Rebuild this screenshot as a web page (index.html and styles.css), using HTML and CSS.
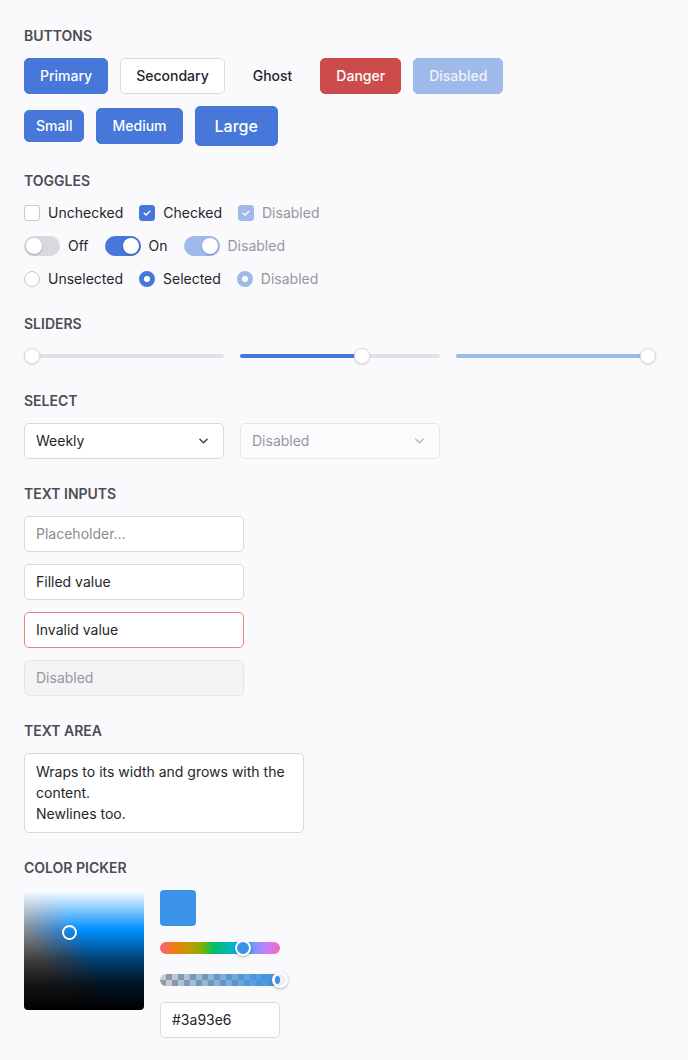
FILE: index.html
```html
<!DOCTYPE html>
<html>
<head>
    <meta charset="UTF-8">
    <title>Controls</title>
    <link rel="stylesheet" href="styles.css">
</head>
<body>

<div class="page">

    <div class="section">
        <h2 class="title">Buttons</h2>
        <div class="row">
            <button class="btn btn-primary">Primary</button>
            <button class="btn btn-secondary">Secondary</button>
            <button class="btn btn-ghost">Ghost</button>
            <button class="btn btn-danger">Danger</button>
            <button class="btn btn-primary is-disabled">Disabled</button>
        </div>
        <div class="row">
            <button class="btn btn-primary btn-sm">Small</button>
            <button class="btn btn-primary">Medium</button>
            <button class="btn btn-primary btn-lg">Large</button>
        </div>
    </div>

    <div class="section">
        <h2 class="title">Toggles</h2>
        <div class="toggle-rows">
            <div class="opts">
                <label class="opt"><span class="check"></span>Unchecked</label>
                <label class="opt"><span class="check on"><svg viewBox="0 0 16 16"><path d="M4.8 8.2l2.2 2.1 4.2-4.4"/></svg></span>Checked</label>
                <label class="opt dis"><span class="check on"><svg viewBox="0 0 16 16"><path d="M4.8 8.2l2.2 2.1 4.2-4.4"/></svg></span>Disabled</label>
            </div>
            <div class="opts">
                <label class="opt"><span class="switch"><i></i></span>Off</label>
                <label class="opt"><span class="switch on"><i></i></span>On</label>
                <label class="opt dis"><span class="switch on"><i></i></span>Disabled</label>
            </div>
            <div class="opts">
                <label class="opt"><span class="radio"></span>Unselected</label>
                <label class="opt"><span class="radio on"></span>Selected</label>
                <label class="opt dis"><span class="radio on"></span>Disabled</label>
            </div>
        </div>
    </div>

    <div class="section">
        <h2 class="title">Sliders</h2>
        <div class="sliders">
            <div class="slider">
                <div class="track"><div class="fill" style="width: 8px;"></div></div>
                <span class="thumb" style="left: 0px;"></span>
            </div>
            <div class="slider">
                <div class="track"><div class="fill" style="width: 122px;"></div></div>
                <span class="thumb" style="left: 114px;"></span>
            </div>
            <div class="slider dis">
                <div class="track"><div class="fill" style="width: 200px;"></div></div>
                <span class="thumb" style="left: 184px;"></span>
            </div>
        </div>
    </div>

    <div class="section">
        <h2 class="title">Select</h2>
        <div class="selects">
            <div class="select">
                <span>Weekly</span>
                <svg class="chev" viewBox="0 0 10 6"><path d="M1 1l4 4 4-4"/></svg>
            </div>
            <div class="select dis">
                <span>Disabled</span>
                <svg class="chev" viewBox="0 0 10 6"><path d="M1 1l4 4 4-4"/></svg>
            </div>
        </div>
    </div>

    <div class="section">
        <h2 class="title">Text inputs</h2>
        <div class="inputs">
            <div class="field placeholder">Placeholder...</div>
            <div class="field">Filled value</div>
            <div class="field invalid">Invalid value</div>
            <div class="field dis">Disabled</div>
        </div>
    </div>

    <div class="section">
        <h2 class="title">Text area</h2>
        <div class="textarea">Wraps to its width and grows with the content.<br>Newlines too.</div>
    </div>

    <div class="section">
        <h2 class="title">Color picker</h2>
        <div class="picker">
            <div class="sv">
                <span class="sv-mark" style="left: 38px; top: 35px;"></span>
            </div>
            <div class="picker-side">
                <div class="swatch" style="background: #3a93e6;"></div>
                <div class="bar-row">
                    <div class="bar hue"></div>
                    <span class="bar-thumb" style="left: 75px; background: #3a93e6;"></span>
                </div>
                <div class="bar-row">
                    <div class="bar alpha"><div class="alpha-fill"></div></div>
                    <span class="bar-thumb alpha-thumb" style="left: 112px;"></span>
                </div>
                <div class="field hex">#3a93e6</div>
            </div>
        </div>
    </div>

</div>

</body>
</html>
```

FILE: styles.css
```css
*{ margin:0; padding:0; box-sizing:border-box;}
body{font:14px/20px Inter,"Noto Sans",Arial,sans-serif;background:#fafafc;color:#25252b;}
button{font:inherit;cursor:pointer;}

.page{padding:26px 24px 24px;}
.section{margin-bottom:25px;}
.title{font-size:14px;line-height:20px;font-weight:600;color:#4b4c56;text-transform:uppercase;margin-bottom:12px;}

/* buttons */
.row{display:flex;align-items:center;gap:12px;margin-bottom:12px;}
.row:last-child{margin-bottom:0;}
.btn{border:1px solid transparent;border-radius:5px;padding:7px 15px;line-height:20px;font-size:14px;font-weight:500;color:#fff;background:none;}
.btn-primary{background:#4677d9;border-color:#4677d9;}
.btn-secondary{background:#fff;border-color:#d9d9df;color:#25252b;}
.btn-ghost{color:#25252b;}
.btn-danger{background:#cb4c4b;border-color:#cb4c4b;}
.btn-primary.is-disabled{background:#a0b9eb;border-color:#a0b9eb;color:#eef3fc;cursor:default;}
.btn-sm{padding:5px 11px;}
.btn-lg{font-size:16px;padding:9px 19px;}

/* toggles */
.toggle-rows{display:flex;flex-direction:column;gap:13px;}
.opts{display:flex;align-items:center;gap:16px;height:20px;}
.opt{display:flex;align-items:center;gap:8px;color:#25252b;}
.opt.dis{color:#96969e;}
.check{width:16px;height:16px;border:1px solid #c9cad0;border-radius:3px;background:#fff;display:flex;align-items:center;justify-content:center;}
.check.on{background:#4677d9;border-color:#4677d9;}
.check svg{width:16px;height:16px;fill:none;stroke:#fff;stroke-width:1.6;stroke-linecap:round;stroke-linejoin:round;}
.dis .check.on{background:#a0b9eb;border-color:#a0b9eb;}
.switch{width:36px;height:20px;border-radius:10px;background:#d8d9de;position:relative;display:block;}
.switch i{position:absolute;top:2px;left:2px;width:16px;height:16px;border-radius:50%;background:#fff;box-shadow:0 1px 2px rgba(0,0,0,.25);}
.switch.on{background:#4677d9;}
.switch.on i{left:18px;}
.dis .switch.on{background:#a0b9eb;}
.radio{width:16px;height:16px;border-radius:50%;border:1px solid #c9cad0;background:#fff;}
.radio.on{border:5px solid #4677d9;}
.dis .radio.on{border-color:#a0b9eb;}

/* sliders */
.sliders{display:flex;gap:16px;}
.slider{width:200px;height:20px;position:relative;display:flex;align-items:center;}
.track{width:100%;height:4px;border-radius:2px;background:#e1e2e7;}
.fill{height:4px;border-radius:2px;background:#4677d9;}
.slider.dis .fill{background:#a0b9eb;}
.thumb{position:absolute;top:2px;width:16px;height:16px;border-radius:50%;background:#fff;border:1px solid #dcdde2;box-shadow:0 1px 2px rgba(0,0,0,.12);}

/* select */
.selects{display:flex;gap:16px;}
.select{width:200px;height:36px;border:1px solid #d9d9df;border-radius:5px;background:#fff;display:flex;align-items:center;justify-content:space-between;padding:0 15px 0 11px;}
.select.dis{background:#fbfbfd;border-color:#e6e6ea;color:#96969e;}
.chev{width:9px;height:6px;fill:none;stroke:#3a3a42;stroke-width:1.5;stroke-linecap:round;stroke-linejoin:round;}
.select.dis .chev{stroke:#b3b3ba;}

/* text inputs */
.inputs{display:flex;flex-direction:column;gap:12px;}
.field{width:220px;height:36px;border:1px solid #d9d9df;border-radius:5px;background:#fff;padding:7px 11px;}
.field.placeholder{color:#8b8b93;}
.field.invalid{border-color:#ee7f7b;}
.field.dis{background:#f4f4f7;border-color:#e6e6ea;color:#96969e;}

.textarea{width:280px;border:1px solid #d9d9df;border-radius:5px;background:#fff;padding:7px 11px 8px;line-height:21px;}

/* color picker */
.picker{display:flex;gap:16px;align-items:flex-start;}
.sv{width:120px;height:120px;border-radius:4px;position:relative;overflow:hidden;
    background:
        linear-gradient(to bottom,#fff 0%,rgba(255,255,255,.55) 15%,rgba(255,255,255,0) 33%),
        linear-gradient(to bottom,rgba(0,0,0,0) 33%,rgba(0,0,0,.55) 58%,rgba(0,0,0,.85) 78%,#000 100%),
        linear-gradient(63deg,#8c8c8c 22%,#3f86c9 40%,#0090ff 52%,#0090ff 100%);}
.sv-mark{position:absolute;width:15px;height:15px;border-radius:50%;border:2px solid #fff;box-shadow:0 0 1px rgba(0,0,0,.4);}
.picker-side{display:flex;flex-direction:column;gap:12px;width:120px;}
.swatch{width:36px;height:36px;border-radius:4px;}
.bar-row{position:relative;height:20px;display:flex;align-items:center;}
.bar{width:120px;height:12px;border-radius:6px;overflow:hidden;}
.hue{background:linear-gradient(to right,#f7677f 0%,#ef7b10 12%,#c59b00 24%,#80b000 35%,#00be68 45%,#00b8b4 57%,#16a6ee 68%,#7497ff 78%,#c57fff 88%,#f26bb6 100%);}
.alpha{background-color:#c9ced6;background-image:linear-gradient(45deg,#999 25%,transparent 25%,transparent 75%,#999 75%),linear-gradient(45deg,#999 25%,transparent 25%,transparent 75%,#999 75%);background-size:12px 12px;background-position:0 0,6px 6px;}
.alpha-fill{height:12px;background:linear-gradient(to right,rgba(58,147,230,0),#3a93e6);}
.bar-thumb{position:absolute;top:2px;width:16px;height:16px;border-radius:50%;border:2px solid #fff;box-shadow:0 1px 3px rgba(0,0,0,.3);}
.alpha-thumb{background:#eeeef1;}
.alpha-thumb:before{content:"";position:absolute;left:1px;top:2px;width:5px;height:8px;border-radius:50%;background:#3a93e6;}
.hex{width:120px;}
```
